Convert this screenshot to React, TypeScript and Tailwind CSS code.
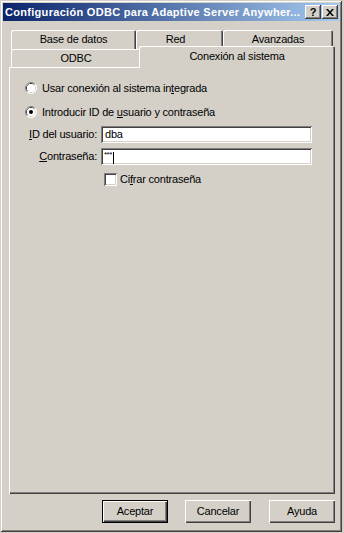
import React from "react";

function Radio({ checked }: { checked?: boolean }) {
  return (
    <svg width="12" height="12" viewBox="0 0 12 12" className="shrink-0">
      <circle cx="6" cy="6" r="5.5" fill="#ffffff" />
      <path d="M2.11 9.89 A5.5 5.5 0 0 1 9.89 2.11" fill="none" stroke="#808080" strokeWidth="1" />
      <path d="M9.89 2.11 A5.5 5.5 0 0 1 2.11 9.89" fill="none" stroke="#ffffff" strokeWidth="1" />
      <path d="M2.82 9.18 A4.5 4.5 0 0 1 9.18 2.82" fill="none" stroke="#404040" strokeWidth="1" />
      <path d="M9.18 2.82 A4.5 4.5 0 0 1 2.82 9.18" fill="none" stroke="#d4d0c8" strokeWidth="1" />
      <circle cx="6" cy="6" r="4" fill="#ffffff" />
      {checked && <circle cx="6" cy="6" r="2" fill="#000000" />}
    </svg>
  );
}

function CaptionButton({ children }: { children: React.ReactNode }) {
  return (
    <div className="w-[16px] h-[14px] bg-[#d4d0c8] flex items-center justify-center shadow-[inset_-1px_-1px_#404040,inset_1px_1px_#ffffff,inset_-2px_-2px_#808080]">
      {children}
    </div>
  );
}

function Button({ label, def }: { label: string; def?: boolean }) {
  return (
    <div
      className={
        def
          ? "w-[66px] h-[23px] border border-black flex items-center justify-center bg-[#d4d0c8] shadow-[inset_1px_1px_#ffffff,inset_-1px_-1px_#404040,inset_-2px_-2px_#808080]"
          : "w-[66px] h-[23px] flex items-center justify-center bg-[#d4d0c8] shadow-[inset_1px_1px_#ffffff,inset_-1px_-1px_#404040,inset_-2px_-2px_#808080]"
      }
    >
      {label}
    </div>
  );
}

export default function App() {
  return (
    <div className="w-[344px] h-[533px] bg-[#d4d0c8] font-['Liberation_Sans',Arial,sans-serif] text-[11px] tracking-[-0.2px] text-black leading-none select-none">
      <div className="w-[342px] h-[532px] flex flex-col p-[3px] shadow-[inset_1px_1px_#d4d0c8,inset_-1px_-1px_#404040,inset_2px_2px_#ffffff,inset_-2px_-2px_#808080]">
        {/* Title bar */}
        <div className="h-[18px] flex items-center bg-linear-to-r/srgb from-[#0a246a] to-[#a6caf0] pl-[2px] pr-[1px]">
          <span className="flex-1 text-white font-bold text-[11px] tracking-[0.3px] whitespace-nowrap overflow-hidden">
            Configuración ODBC para Adaptive Server Anywher...
          </span>
          <CaptionButton>
            <span className="font-bold text-[11px] leading-none mt-[1px]">?</span>
          </CaptionButton>
          <div className="w-[1px]" />
          <CaptionButton>
            <svg width="8" height="7" viewBox="0 0 8 7">
              <path d="M0 0h2l2 2.5L6 0h2L5 3.5 8 7H6L4 4.5 2 7H0l3-3.5z" fill="#000" />
            </svg>
          </CaptionButton>
        </div>

        {/* Tab control */}
        <div className="ml-[6px] mt-[9px] w-[326px] flex flex-col">
          {/* back row */}
          <div className="h-[19px] flex pl-[2px]">
            <div className="w-[125px] h-full flex items-center justify-center pb-[1px] rounded-t-[2px] shadow-[inset_1px_1px_#ffffff,inset_-1px_0_#404040,inset_-2px_0_#808080]">
              Base de datos
            </div>
            <div className="w-[87px] h-full flex items-center justify-center pb-[1px] pr-[8px] rounded-t-[2px] shadow-[inset_1px_1px_#ffffff,inset_-1px_0_#404040,inset_-2px_0_#808080]">
              Red
            </div>
            <div className="w-[110px] h-full flex items-center justify-center pb-[1px] rounded-t-[2px] shadow-[inset_1px_1px_#ffffff,inset_-1px_0_#404040,inset_-2px_0_#808080]">
              Avanzadas
            </div>
          </div>
          {/* front row */}
          <div className="h-[18px] flex items-start pl-[2px]">
            <div className="w-[130px] h-[18px] flex items-center justify-center pt-[1px] rounded-t-[2px] shadow-[inset_1px_1px_#ffffff,inset_-1px_0_#404040,inset_-2px_0_#808080]">
              ODBC
            </div>
            <div className="relative z-10 ml-[-2px] mt-[-3px] w-[196px] h-[22px] bg-[#d4d0c8] flex items-center justify-center pb-[2px] rounded-t-[2px] shadow-[inset_1px_1px_#ffffff,inset_-1px_0_#404040,inset_-2px_0_#808080]">
              Conexión al sistema
            </div>
          </div>
          {/* panel */}
          <div className="h-[427px] flex flex-col pl-[16px] shadow-[inset_1px_1px_#ffffff,inset_-1px_-1px_#404040,inset_-2px_-2px_#808080]">
            <div className="mt-[15px] h-[12px] flex items-center gap-[5px]">
              <Radio />
              <span>
                Usar conexión al sistema in<u className="underline-offset-[1px]">t</u>egrada
              </span>
            </div>
            <div className="mt-[12px] h-[12px] flex items-center gap-[5px]">
              <Radio checked />
              <span>
                Introducir ID de <u className="underline-offset-[1px]">u</u>suario y contraseña
              </span>
            </div>
            <div className="mt-[8px] h-[17px] flex items-center gap-[4px]">
              <div className="w-[72px] text-right whitespace-nowrap">
                <u className="underline-offset-[1px]">I</u>D del usuario:
              </div>
              <div className="w-[211px] h-[17px] bg-white flex items-center pl-[4px] shadow-[inset_1px_1px_#808080,inset_-1px_-1px_#ffffff,inset_2px_2px_#404040,inset_-2px_-2px_#d4d0c8]">
                dba
              </div>
            </div>
            <div className="mt-[5px] h-[17px] flex items-center gap-[4px]">
              <div className="w-[72px] text-right whitespace-nowrap">
                <u className="underline-offset-[1px]">C</u>ontraseña:
              </div>
              <div className="w-[211px] h-[17px] bg-white flex items-start pl-[3px] pt-[3px] shadow-[inset_1px_1px_#808080,inset_-1px_-1px_#ffffff,inset_2px_2px_#404040,inset_-2px_-2px_#d4d0c8]">
                <span className="text-[8px] leading-none tracking-[-0.5px]">***</span>
                <div className="w-[1px] h-[12px] bg-black ml-[1px] mt-[1px]" />
              </div>
            </div>
            <div className="mt-[8px] ml-[79px] h-[13px] flex items-center gap-[3px]">
              <div className="w-[13px] h-[13px] bg-white shadow-[inset_1px_1px_#808080,inset_-1px_-1px_#ffffff,inset_2px_2px_#404040,inset_-2px_-2px_#d4d0c8]" />
              <span>
                Ci<u className="underline-offset-[1px]">f</u>rar contraseña
              </span>
            </div>
          </div>
        </div>

        {/* Buttons */}
        <div className="mt-[6px] flex justify-end pr-[4px]">
          <div className="mr-[17px]">
            <Button label="Aceptar" def />
          </div>
          <div className="mr-[18px]">
            <Button label="Cancelar" />
          </div>
          <Button label="Ayuda" />
        </div>
      </div>
    </div>
  );
}
